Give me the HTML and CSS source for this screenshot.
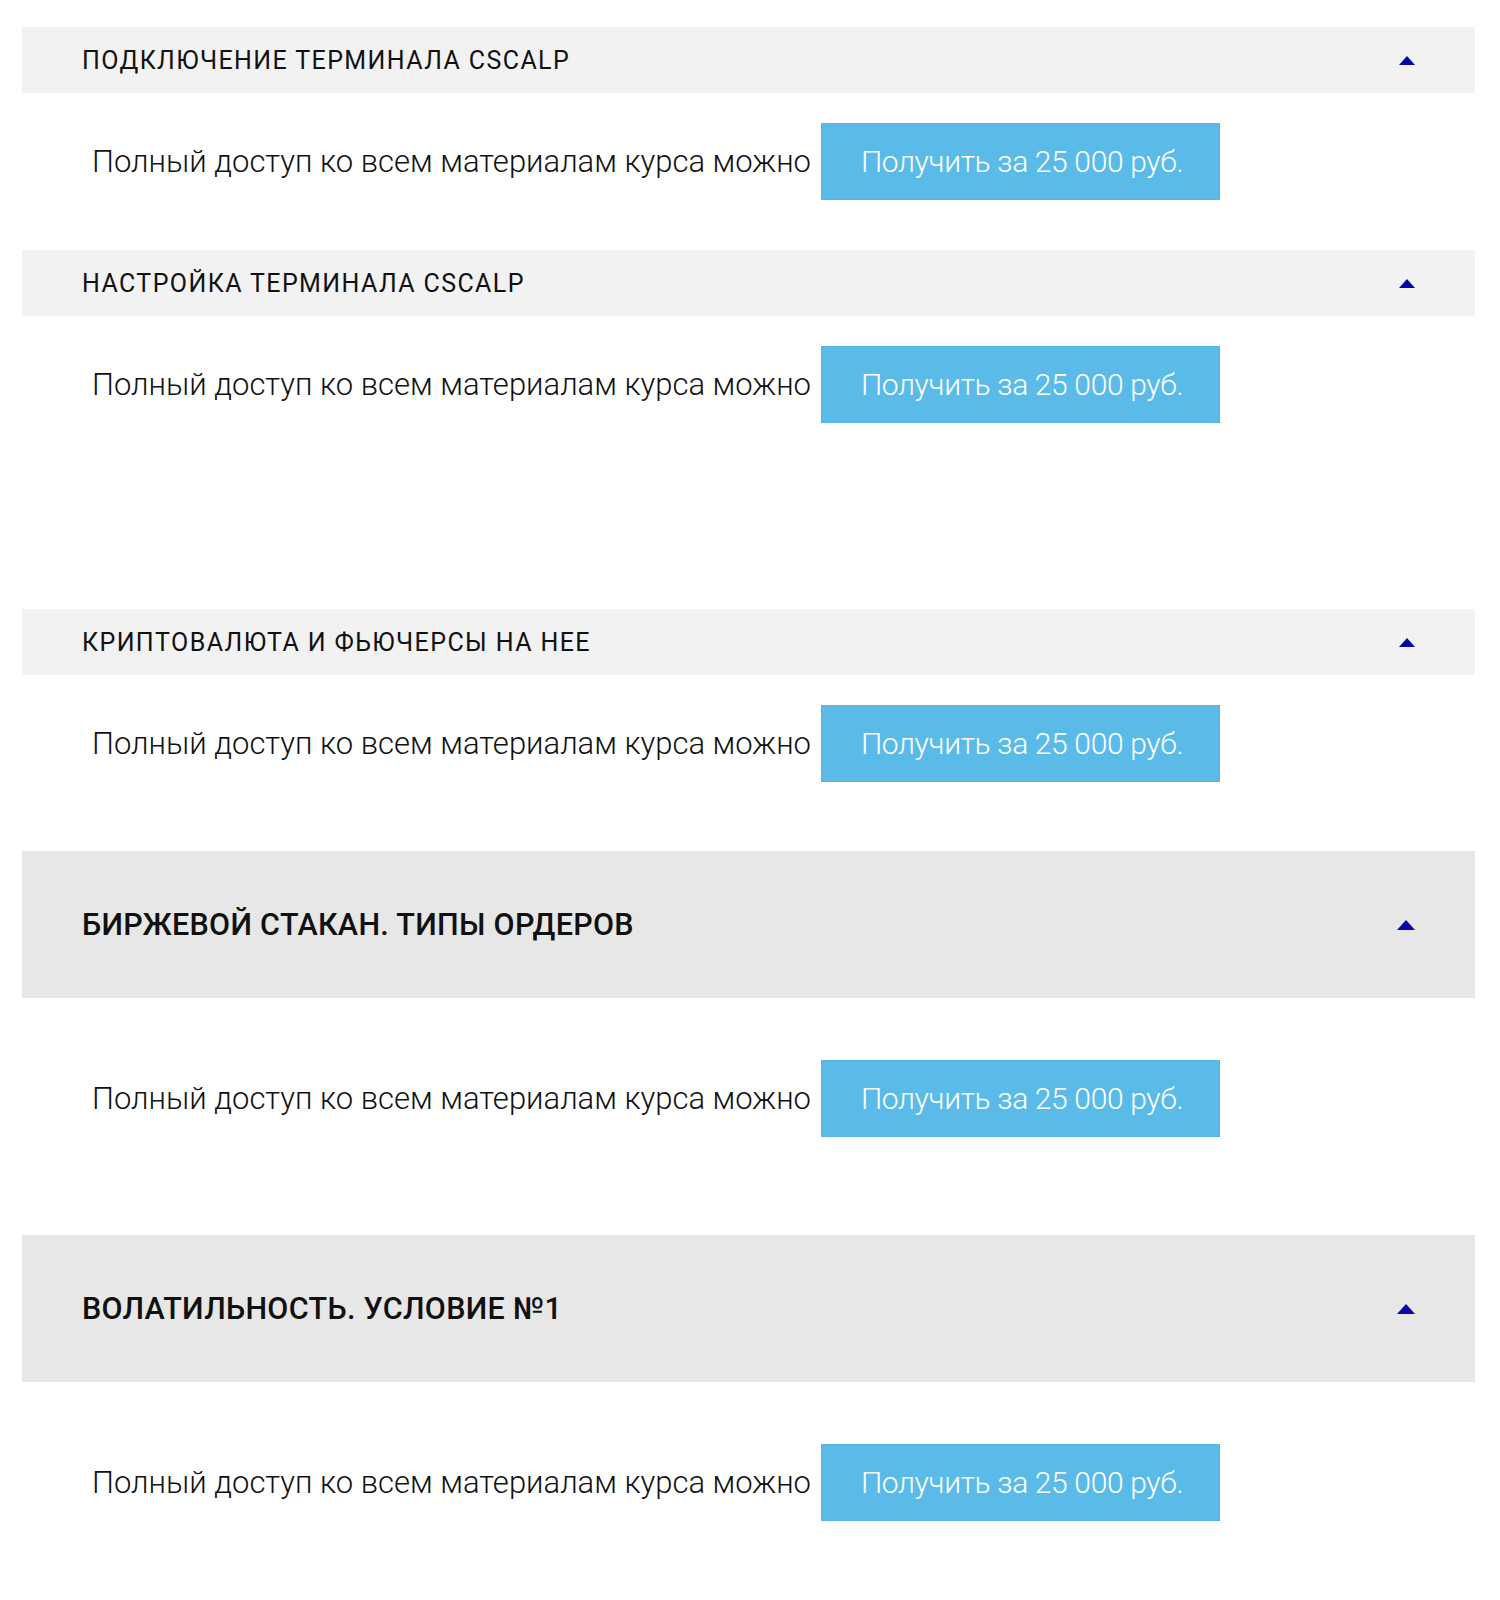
FILE: index.html
```html
<!DOCTYPE html>
<html>
  <head>
    <meta charset="utf-8">
    <title>Курс: уроки</title>
    <link rel="stylesheet" href="styles.css">
  </head>
  <body>
    <div class="lessons">
      <!-- Small headers -->
      <div class="lesson">
        <div class="lesson-head">
          <span class="lesson-title">Подключение терминала CScalp</span>
          <span class="arrow"></span>
        </div>
        <div class="lesson-body">
          <span class="lesson-text">Полный доступ ко всем материалам курса можно</span>
          <a class="buy-btn" href="#">Получить за 25 000 руб.</a>
        </div>
      </div>

      <div class="lesson">
        <div class="lesson-head">
          <span class="lesson-title">Настройка терминала CScalp</span>
          <span class="arrow"></span>
        </div>
        <div class="lesson-body lesson-body-tall">
          <span class="lesson-text">Полный доступ ко всем материалам курса можно</span>
          <a class="buy-btn" href="#">Получить за 25 000 руб.</a>
        </div>
      </div>

      <div class="lesson">
        <div class="lesson-head">
          <span class="lesson-title">Криптовалюта и фьючерсы на нее</span>
          <span class="arrow"></span>
        </div>
        <div class="lesson-body lesson-body-mid">
          <span class="lesson-text">Полный доступ ко всем материалам курса можно</span>
          <a class="buy-btn" href="#">Получить за 25 000 руб.</a>
        </div>
      </div>

      <!-- Big headers -->
      <div class="lesson lesson-big">
        <div class="lesson-head">
          <span class="lesson-title">Биржевой стакан. Типы ордеров</span>
          <span class="arrow"></span>
        </div>
        <div class="lesson-body">
          <span class="lesson-text">Полный доступ ко всем материалам курса можно</span>
          <a class="buy-btn" href="#">Получить за 25 000 руб.</a>
        </div>
      </div>

      <div class="lesson lesson-big">
        <div class="lesson-head">
          <span class="lesson-title">Волатильность. Условие №1</span>
          <span class="arrow"></span>
        </div>
        <div class="lesson-body">
          <span class="lesson-text">Полный доступ ко всем материалам курса можно</span>
          <a class="buy-btn" href="#">Получить за 25 000 руб.</a>
        </div>
      </div>
    </div>
  </body>
</html>
```

FILE: styles.css
```css
html, body {
    margin: 0;
    padding: 0;
}

body {
    font-family: Roboto, "Liberation Sans", sans-serif;
    background: #fff;
    color: #111;
}

.lessons {
    padding: 27px 25px 0 22px;
}

.lesson-head {
    display: flex;
    align-items: center;
    height: 66px;
    padding: 0 60px;
    background-color: #f2f2f2;
}
.lesson-title {
    font-size: 25px;
    letter-spacing: 1.4px;
    text-transform: uppercase;
    color: #111;
}
.arrow {
    margin-left: auto;
    width: 0;
    height: 0;
    border-left: 8px solid transparent;
    border-right: 8px solid transparent;
    border-bottom: 9px solid #0505a6;
}

.lesson-body {
    display: flex;
    align-items: center;
    padding: 30px 0 50px 70px;
}
.lesson-body-tall {
    padding-bottom: 186px;
}
.lesson-body-mid {
    padding-bottom: 69px;
}
.lesson-text {
    font-size: 31px;
    font-weight: 300;
    margin-right: 10px;
}
.buy-btn {
    display: inline-block;
    width: 399px;
    height: 77px;
    line-height: 75px;
    box-sizing: border-box;
    padding-left: 39px;
    background-color: #5bbbe8;
    border: 1px solid #55b4e4;
    color: #fff;
    font-size: 30px;
    font-weight: 300;
    letter-spacing: -0.35px;
    text-decoration: none;
}

/* Big variant */
.lesson-big .lesson-head {
    height: 147px;
    background-color: #e7e7e7;
}
.lesson-big .lesson-title {
    font-size: 30.5px;
    font-weight: 500;
    letter-spacing: 0.3px;
}
.lesson-big .arrow {
    border-left-width: 9px;
    border-right-width: 9px;
    border-bottom-width: 10px;
}
.lesson-big .lesson-body {
    padding: 62px 0 98px 70px;
}
```
